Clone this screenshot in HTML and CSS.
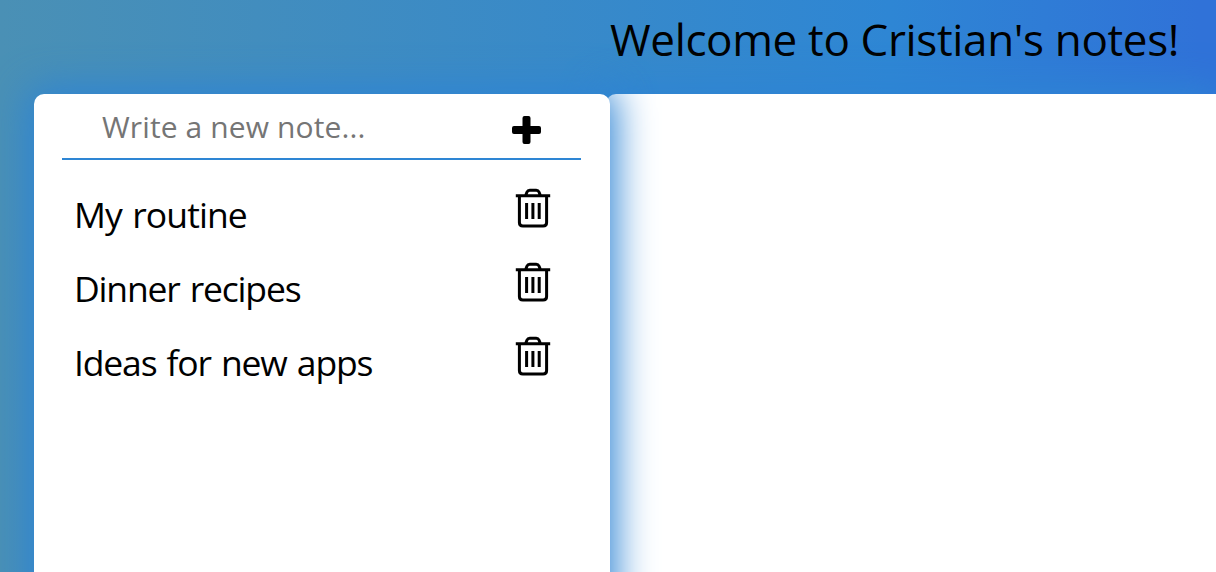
FILE: index.html
```html
<!DOCTYPE html>
<html lang="en">
<head>
<meta charset="utf-8">
<title>Notes</title>
<link rel="stylesheet" href="styles.css">
</head>
<body>
<svg class="defs" aria-hidden="true">
  <symbol id="trash" viewBox="0 0 36 40">
    <path d="M.8 7.800H35.200M4.400 7.800V34.500Q4.400 38 7.900 38H28.100Q31.600 38 31.600 34.500V7.800M10.600 7.500 12 4Q12.800 2.200 14.800 2.200H21.200Q23.200 2.200 24 4L25.400 7.500" fill="none" stroke="#000" stroke-width="3"/>
    <path d="M11.600 15V31M17.900 15V31M24.200 15V31" stroke="#000" stroke-width="3"/>
  </symbol>
</svg>
<header class="header"><h1 class="title">Welcome to Cristian's notes!</h1></header>
<main class="board">
  <section class="sidebar">
    <form class="new-note">
      <input class="field" type="text" placeholder="Write a new note...">
      <svg class="plus" viewBox="0 0 29 28"><path d="M12.500 0h4q2 0 2 2v8h8.500q2 0 2 2v4q0 2-2 2h-8.500v8q0 2-2 2h-4q-2 0-2-2v-8h-8.500q-2 0-2-2v-4q0-2 2-2h8.500v-8q0-2 2-2z"/></svg>
    </form>
    <ul class="notes">
      <li class="note"><span class="short">My routine</span><svg class="trash"><use href="#trash"/></svg></li>
      <li class="note"><span class="medium">Dinner recipes</span><svg class="trash"><use href="#trash"/></svg></li>
      <li class="note"><span class="long">Ideas for new apps</span><svg class="trash"><use href="#trash"/></svg></li>
    </ul>
  </section>
  <section class="editor"></section>
</main>
</body>
</html>
```
FILE: styles.css
```css
* { box-sizing: border-box; }
html { overflow: hidden; }
body {
  margin: 0;
  height: 572px;
  overflow: hidden;
  display: flex;
  flex-direction: column;
  font-family: "Open Sans", "Noto Sans", sans-serif;
  color: #000;
  background: linear-gradient(90deg, #4a90b5 0, #2e86d4 890px, #3072d8 1200px);
}
.defs { position: absolute; width: 0; height: 0; }
.header { height: 94px; flex: none; padding: 9px 0 0 610px; }
.title { margin: 0; font-size: 44px; line-height: 60px; font-weight: 400; letter-spacing: -0.35px; white-space: nowrap; }
.board { height: 520px; flex: none; display: flex; padding-left: 34px; }
.sidebar {
  width: 576px;
  flex: none;
  padding: 0 29px 0 28px;
  background: #fff;
  border-radius: 10px 10px 0 0;
  box-shadow: 0 0 38px 6px #2e84d4;
  z-index: 1;
}
.editor { flex: 1; margin-left: -4px; background: #fff; border-radius: 10px 0 0 0; box-shadow: 0 0 38px 6px #2e84d4; }
.new-note {
  height: 66px;
  display: flex;
  align-items: flex-start;
  padding-left: 40px;
  border-bottom: 2px solid #2e86d4;
}
.field {
  width: 410px;
  height: 66px;
  margin: 0;
  padding: 0 0 2px;
  border: 0;
  outline: 0;
  background: transparent;
  font: 30px "Open Sans", "Noto Sans", sans-serif;
  letter-spacing: 0.12px;
}
.field::placeholder { color: #757575; }
.plus { width: 29px; height: 28px; margin-top: 22px; }
.notes { list-style: none; margin: 0; padding: 18px 30px 0 12px; }
.note { height: 74px; display: flex; justify-content: space-between; font-size: 35.500px; line-height: 72px; white-space: nowrap; word-spacing: 2px; }
.short { letter-spacing: -0.9px; }
.medium { letter-spacing: -1.18px; }
.long { letter-spacing: -1.15px; }
.trash { width: 36px; height: 40px; margin-top: 10px; }
```
